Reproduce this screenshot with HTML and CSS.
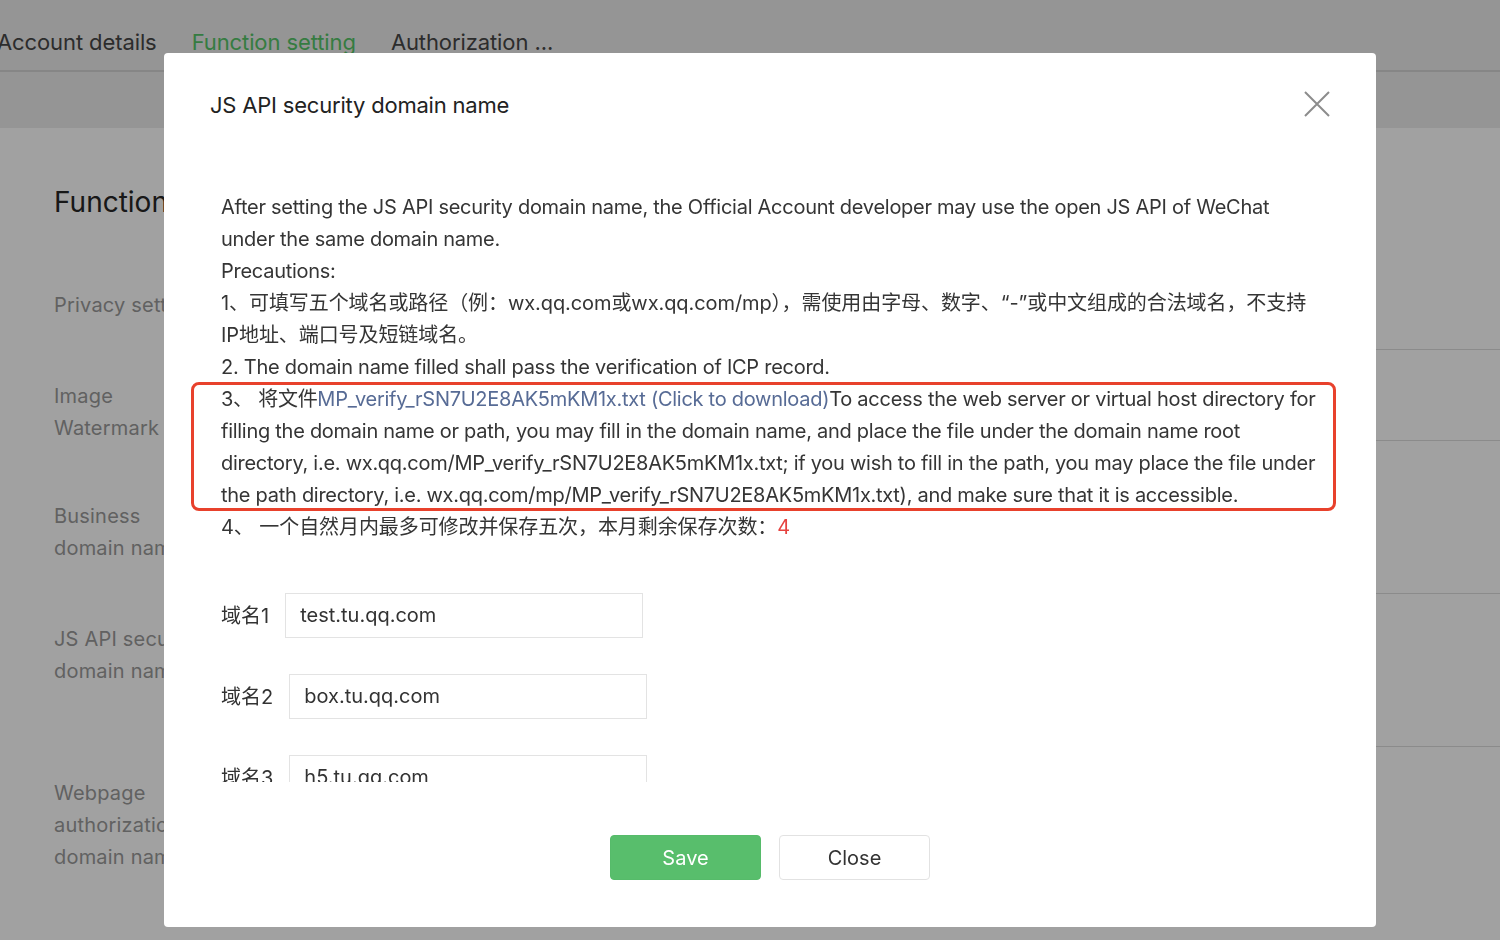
FILE: index.html
```html
<!DOCTYPE html>
<html lang="zh-CN">
<head>
<meta charset="utf-8">
<title>JS API security domain name</title>
<link rel="stylesheet" href="styles.css">
</head>
<body>
<div class="page">
  <header class="page-head">
    <nav class="tabs">
      <span class="tab">Account details</span>
      <span class="tab tab-active">Function setting</span>
      <span class="tab">Authorization ...</span>
    </nav>
  </header>
  <main class="page-main">
    <h1 class="page-title">Function setting</h1>
    <div class="setting-row r1"><div class="setting-label">Privacy setting</div><div class="setting-body"></div></div>
    <div class="setting-row r2"><div class="setting-label">Image<br>Watermark</div><div class="setting-body"></div></div>
    <div class="setting-row r3"><div class="setting-label">Business<br>domain name</div><div class="setting-body"></div></div>
    <div class="setting-row r4"><div class="setting-label">JS API security<br>domain name</div><div class="setting-body"></div></div>
    <div class="setting-row r5"><div class="setting-label">Webpage<br>authorization<br>domain name</div><div class="setting-body"></div></div>
  </main>
</div>

<div class="mask"></div>

<div class="dialog">
  <div class="dialog-head">
    <h2 class="dialog-title">JS API security domain name</h2>
    <button class="dialog-close" aria-label="close">
      <svg width="26" height="26" viewBox="0 0 26 26"><path d="M1 1 L25 25 M25 1 L1 25" stroke="#8c8c8c" stroke-width="2" fill="none"/></svg>
    </button>
  </div>
  <div class="dialog-body">
    <div class="notes">
      <p>After setting the JS API security domain name, the Official Account developer may use the open JS API of WeChat<br>under the same domain name.</p>
      <p>Precautions:</p>
      <p class="cjk">1、可填写五个域名或路径（例：wx.qq.com或wx.qq.com/mp），需使用由字母、数字、“-”或中文组成的合法域名，不支持<br>IP地址、端口号及短链域名。</p>
      <p>2. The domain name filled shall pass the verification of ICP record.</p>
      <p class="marked">3、 将文件<a class="link">MP_verify_rSN7U2E8AK5mKM1x.txt (Click to download)</a>To access the web server or virtual host directory for<br>filling the domain name or path, you may fill in the domain name, and place the file under the domain name root<br>directory, i.e. wx.qq.com/MP_verify_rSN7U2E8AK5mKM1x.txt; if you wish to fill in the path, you may place the file under<br>the path directory, i.e. wx.qq.com/mp/MP_verify_rSN7U2E8AK5mKM1x.txt), and make sure that it is accessible.</p>
      <p class="cjk">4、 一个自然月内最多可修改并保存五次，本月剩余保存次数：<span class="count">4</span></p>
    </div>
    <div class="domains">
      <div class="domain-row"><label class="domain-label">域名1</label><div class="domain-input">test.tu.qq.com</div></div>
      <div class="domain-row"><label class="domain-label">域名2</label><div class="domain-input">box.tu.qq.com</div></div>
      <div class="domain-row"><label class="domain-label">域名3</label><div class="domain-input">h5.tu.qq.com</div></div>
    </div>
  </div>
  <div class="dialog-foot">
    <button class="btn btn-primary">Save</button>
    <button class="btn btn-default">Close</button>
  </div>
</div>
</body>
</html>
```

FILE: styles.css
```css
*, *::before, *::after { box-sizing: border-box; }

html, body {
  margin: 0;
  padding: 0;
  width: 1500px;
  height: 940px;
  overflow: hidden;
  background: #ffffff;
  font-family: "Inter", "Noto Sans CJK SC", sans-serif;
  color: #333;
}

/* underlying page */
.page-head {
  height: 128px;
  background: #ececec;
}
.tabs {
  height: 72px;
  border-bottom: 2px solid #d4d4d4;
  display: flex;
  gap: 35px;
  margin-left: -3px;
  align-items: flex-start;
  padding-top: 27px;
}
.tab {
  font-size: 22px;
  line-height: 30px;
  color: #474747;
  letter-spacing: -0.1px;
}
.tab-active { color: #55c468; }

.page-main {
  padding-left: 54px;
}
.page-title {
  margin: 0;
  padding-top: 55px;
  font-size: 28px;
  line-height: 38px;
  font-weight: 400;
  color: #262626;
  height: 131px;
  width: 110px;
  white-space: nowrap;
  overflow: hidden;
}
.setting-row {
  display: grid;
  grid-template-columns: 110px 1fr;
}
.setting-label {
  font-size: 20px;
  line-height: 32px;
  color: #9a9a9a;
  white-space: nowrap;
  overflow: hidden;
  letter-spacing: 0.2px;
}
.setting-body { border-bottom: 1px solid #dcdcdc; margin-left: 80px; }
.r1 { height: 91px; }
.r1 .setting-label { padding-top: 30px; }
.r2 { height: 91px; }
.r2 .setting-label { padding-top: 30px; }
.r3 { height: 153px; }
.r3 .setting-label { padding-top: 59px; }
.r4 { height: 153px; }
.r4 .setting-label { padding-top: 29px; }
.r5 { height: 190px; }
.r5 .setting-label { padding-top: 30px; }
.r5 .setting-body { border-bottom: none; }

.mask {
  position: fixed;
  inset: 0;
  background: rgba(0, 0, 0, 0.37);
}

/* dialog */
.dialog {
  position: fixed;
  left: 164px;
  top: 53px;
  width: 1212px;
  height: 874px;
  background: #fff;
  border-radius: 4px;
  display: flex;
  flex-direction: column;
}
.dialog-head {
  height: 138px;
  flex: none;
  display: flex;
  align-items: flex-start;
  justify-content: space-between;
  padding: 38px 46px 0 46px;
}
.dialog-title {
  margin: 0;
  font-size: 22px;
  line-height: 28px;
  font-weight: 400;
  color: #222;
  letter-spacing: -0.2px;
}
.dialog-close {
  border: none;
  background: none;
  padding: 0;
  width: 26px;
  height: 26px;
  display: block;
}
.dialog-close svg { display: block; }

.dialog-body {
  flex: none;
  height: 591px;
  overflow: hidden;
  padding-left: 57px;
}
.notes p {
  margin: 0;
  font-size: 20px;
  line-height: 32px;
  color: #353535;
  white-space: nowrap;
  letter-spacing: -0.27px;
}
.notes p.cjk { letter-spacing: -0.08px; }
.marked { position: relative; }
.marked::after {
  content: "";
  position: absolute;
  left: -30px;
  top: -1px;
  width: 1145px;
  height: 129px;
  border: 3px solid #e8412c;
  border-radius: 8px;
}
.link { color: #576b95; text-decoration: none; }
.count { color: #e64340; }

.domains {
  margin-top: 50px;
  display: flex;
  flex-direction: column;
  gap: 36px;
}
.domain-row {
  display: flex;
  align-items: center;
  gap: 16px;
}
.domain-label {
  font-size: 20px;
  line-height: 28px;
  color: #333;
}
.domain-input {
  width: 358px;
  height: 45px;
  border: 1px solid #e3e3e3;
  padding-left: 14px;
  font-size: 20px;
  line-height: 43px;
  color: #333;
}

.dialog-foot {
  flex: none;
  display: flex;
  justify-content: center;
  gap: 18px;
  padding-top: 53px;
}
.btn {
  width: 151px;
  height: 45px;
  border-radius: 4px;
  font-family: "Inter", "Noto Sans CJK SC", sans-serif;
  font-size: 20px;
  padding: 0;
}
.btn-primary {
  background: #58be6c;
  border: 1px solid #56bb6a;
  color: #fff;
}
.btn-default {
  background: #fff;
  border: 1px solid #e2e2e2;
  color: #333;
}
```
